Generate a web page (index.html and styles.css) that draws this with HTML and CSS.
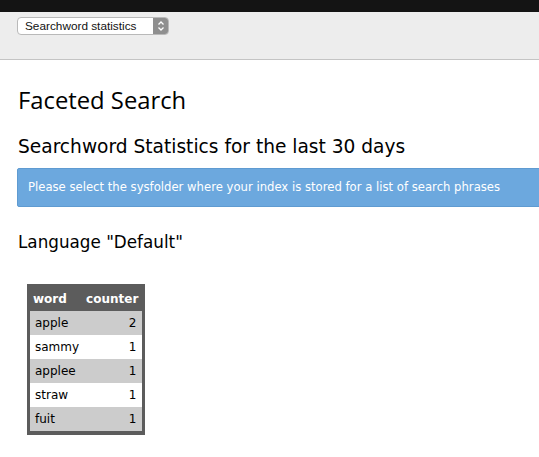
FILE: index.html
```html
<!DOCTYPE html>
<html>
<head>
<meta charset="utf-8">
<link rel="stylesheet" href="styles.css">
</head>
<body>
<div class="topbar"></div>
<div class="docheader">
  <div class="select">
    <span class="select-label">Searchword statistics</span>
    <span class="select-arrow">
      <svg width="8" height="12" viewBox="0 0 8 12"><path d="M1.5 4.5 L4 2 L6.5 4.5 M1.5 7.5 L4 10 L6.5 7.5" fill="none" stroke="#fff" stroke-width="1.3"/></svg>
    </span>
  </div>
</div>
<div class="content">
  <h1 class="title">Faceted Search</h1>
  <h2 class="subtitle">Searchword Statistics for the last 30 days</h2>
  <div class="callout">Please select the sysfolder where your index is stored for a list of search phrases</div>
  <h3 class="lang">Language "Default"</h3>
  <table class="stats">
    <thead>
      <tr><th class="word">word</th><th class="count">counter</th></tr>
    </thead>
    <tbody>
      <tr><td class="word">apple</td><td class="count">2</td></tr>
      <tr><td class="word">sammy</td><td class="count">1</td></tr>
      <tr><td class="word">applee</td><td class="count">1</td></tr>
      <tr><td class="word">straw</td><td class="count">1</td></tr>
      <tr><td class="word">fuit</td><td class="count">1</td></tr>
    </tbody>
  </table>
</div>
</body>
</html>
```

FILE: styles.css
```css
html, body {
  margin: 0;
  padding: 0;
  background: #fff;
  overflow: hidden;
}
body {
  font-family: "DejaVu Sans", Verdana, sans-serif;
  color: #000;
}
.topbar {
  height: 12px;
  background: #141414;
}
.docheader {
  background: #ededed;
  border-bottom: 1px solid #c4c4c4;
  padding: 5px 0 0 17px;
  box-sizing: border-box;
  height: 48px;
}
.select {
  display: flex;
  width: 152px;
  height: 18px;
  box-sizing: border-box;
  border: 1px solid #b9b9b9;
  border-radius: 4px;
  background: #fff;
  overflow: hidden;
}
.select-label {
  flex: 1;
  font-family: "Liberation Sans", Arial, sans-serif;
  font-size: 11.8px;
  line-height: 16px;
  padding-left: 7px;
  color: #111;
}
.select-arrow {
  width: 15px;
  background: #8f8f8f;
  display: flex;
  align-items: center;
  justify-content: center;
}
.content {
  padding-left: 17px;
  width: 560px;
}
.title {
  font-family: "Open Sans", sans-serif;
  font-weight: normal;
  font-size: 23.8px;
  line-height: 30px;
  margin: 25px 0 0 1px;
}
.subtitle {
  font-weight: normal;
  font-size: 18.6px;
  line-height: 24px;
  margin: 20px 0 0 1px;
}
.callout {
  margin-top: 9px;
  height: 39px;
  box-sizing: border-box;
  background: #6ca8de;
  border: 1px solid #5f9bd1;
  border-radius: 2px;
  color: #fff;
  font-size: 11.65px;
  line-height: 37px;
  padding-left: 10px;
}
.lang {
  font-weight: normal;
  font-size: 16.8px;
  line-height: 22px;
  margin: 24px 0 0 1px;
}
.stats {
  margin: 31px 0 0 10px;
  border-collapse: collapse;
  border: 3px solid #5c5c5c;
  border-bottom-width: 4px;
  font-size: 12px;
}
.stats th {
  background: #5c5c5c;
  color: #fff;
  font-weight: bold;
  height: 24px;
  padding: 0 4px 0 3px;
  text-align: left;
}
.stats th.count {
  text-align: right;
  padding-left: 6px;
}
.stats td {
  height: 24px;
  padding: 0 1px 0 5px;
}
.stats td.count {
  text-align: right;
  padding-right: 6px;
}
.stats tbody tr:nth-child(odd) td {
  background: #cccccc;
}
.stats tbody tr:nth-child(even) td {
  background: #fff;
}
```
